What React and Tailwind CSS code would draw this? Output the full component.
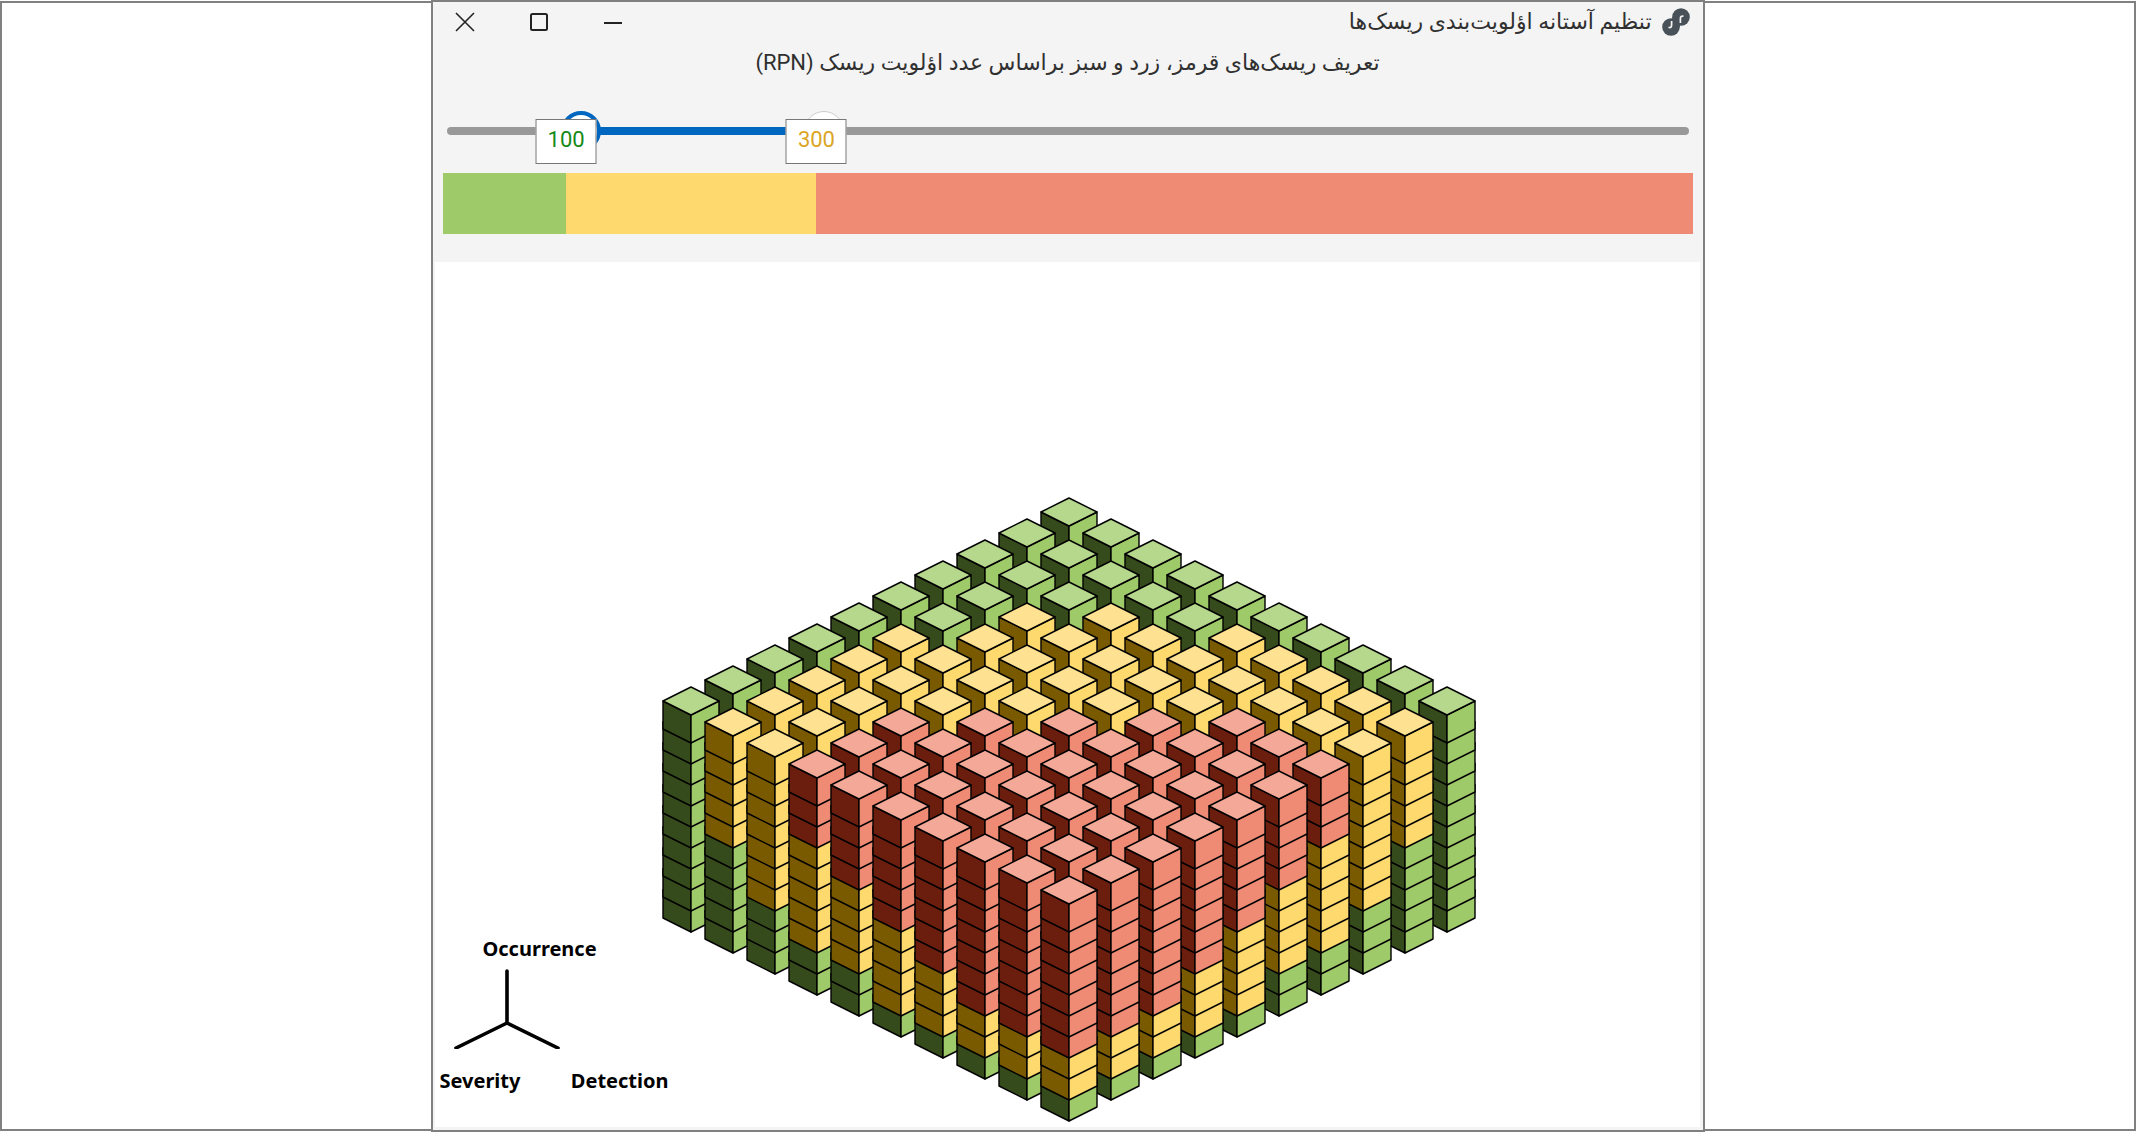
import { useState } from "react";

const GREEN = { top: "#b5d88c", left: "#364b1c", right: "#9eca69" };
const YELLOW = { top: "#ffe291", left: "#7a5a00", right: "#fed96e" };
const RED = { top: "#f4a998", left: "#6b1e0d", right: "#ef8b74" };

const SIZE = 10;
const MIN = 2;
const MAX = 1000;

function percent(value) {
  return ((value - MIN) / (MAX - MIN)) * 100;
}

function colorOf(rpn, low, high) {
  if (rpn <= low) return GREEN;
  if (rpn <= high) return YELLOW;
  return RED;
}

// One small box, x/y is the back corner of its top face
function Cube({ x, y, color }) {
  return (
    <g>
      <polygon
        fill={color.left}
        points={`${x - 28},${y + 14} ${x},${y + 28} ${x},${y + 56} ${x - 28},${y + 42}`}
      />
      <polygon
        fill={color.right}
        points={`${x + 28},${y + 14} ${x},${y + 28} ${x},${y + 56} ${x + 28},${y + 42}`}
      />
      <polygon
        fill={color.top}
        points={`${x},${y} ${x + 28},${y + 14} ${x},${y + 28} ${x - 28},${y + 14}`}
      />
    </g>
  );
}

function RiskCube({ low, high }) {
  const cubes = [];
  // back to front, bottom to top
  for (let s = 1; s <= SIZE; s++) {
    for (let d = 1; d <= SIZE; d++) {
      for (let o = 1; o <= SIZE; o++) {
        cubes.push(
          <Cube
            key={`${s}-${d}-${o}`}
            x={410 + (d - s) * 42}
            y={1 + (s + d - 2) * 21 + (SIZE - o) * 21}
            color={colorOf(s * d * o, low, high)}
          />
        );
      }
    }
  }
  return (
    <svg width="818" height="626" viewBox="0 0 818 626" aria-label="RPN cube">
      <g stroke="#000" strokeWidth="1.4" strokeLinejoin="round">
        {cubes}
      </g>
    </svg>
  );
}

function Axes() {
  return (
    <div className="w-60 text-xl leading-7 font-bold text-black font-['Noto_Sans',sans-serif]">
      <div className="pl-[47px]">Occurrence</div>
      <svg className="mt-1.5 mb-2.5 ml-[19px]" width="106" height="80" viewBox="0 0 106 80">
        <path
          d="M53 2V54M53 54L2 79M53 54L104 79"
          fill="none"
          stroke="#000"
          strokeWidth="3.6"
          strokeLinecap="round"
        />
      </svg>
      <div className="flex justify-between pt-2 pr-[7px] pl-1">
        <span>Severity</span>
        <span>Detection</span>
      </div>
    </div>
  );
}

function Logo() {
  return (
    <svg width="28" height="28" viewBox="0 0 28 28">
      <g fill="#475157">
        <circle cx="9" cy="19" r="8.8" />
        <circle cx="19" cy="9" r="8.8" />
        <path d="M10.200 9H17.800V19H10.200Z" />
      </g>
      <path
        d="M6.500 19.300Q9.600 20.300 9.600 17V13M18.400 15V10.500Q18.400 7.500 21.500 8.300"
        fill="none"
        stroke="#f4f4f4"
        strokeWidth="1.7"
      />
    </svg>
  );
}

function Thumb({ value, label, onChange, ring }) {
  return (
    <div className="absolute top-0 w-0" style={{ left: `${percent(value)}%` }}>
      <div className={`absolute top-0 -left-5 size-10 rounded-full bg-white ${ring}`} />
      <input
        type="range"
        min={MIN}
        max={MAX}
        value={value}
        aria-label={label}
        onChange={onChange}
        className="absolute top-0 -left-5 size-10 cursor-pointer opacity-0"
      />
    </div>
  );
}

function ValueBox({ value, text }) {
  return (
    <output
      className={`absolute top-2 flex h-[45px] w-[61px] -translate-x-1/2 justify-center border border-[#777] bg-white pt-1 text-[22px] leading-8 ${text}`}
      style={{ left: `${percent(value)}%` }}
    >
      {value}
    </output>
  );
}

export default function App() {
  const [low, setLow] = useState(100);
  const [high, setHigh] = useState(300);

  return (
    <div className="flex min-h-screen font-[Roboto,'DejaVu_Sans',sans-serif] text-[#303030]">
      <div className="my-px flex-1 border-2 border-r-0 border-[#808080] bg-white" />

      <main
        dir="rtl"
        className="flex w-[59.6%] flex-col border-2 border-[#808080] bg-[#f4f4f4] pr-[3px] pb-[3px] pl-[2px]"
      >
        {/* Title bar */}
        <header className="mb-px flex h-10 items-center justify-between pr-[10px] pl-5">
          <div className="flex items-center gap-2.5">
            <Logo />
            <h1 className="text-[22px] leading-8">تنظیم آستانه اؤلویت‌بندی ریسک‌ها</h1>
          </div>
          <div className="flex gap-[54px]">
            <button aria-label="Minimize">
              <svg width="20" height="20" viewBox="0 0 20 20">
                <path d="M1 11H19" stroke="#222" strokeWidth="2" />
              </svg>
            </button>
            <button aria-label="Maximize">
              <svg width="20" height="20" viewBox="0 0 20 20">
                <rect x="2" y="2" width="16" height="16" rx="1.5" fill="none" stroke="#222" strokeWidth="2" />
              </svg>
            </button>
            <button aria-label="Close">
              <svg width="20" height="20" viewBox="0 0 20 20">
                <path d="M1 1L19 19M19 1L1 19" stroke="#222" strokeWidth="1.6" />
              </svg>
            </button>
          </div>
        </header>

        <p className="text-center text-[22px] leading-10">
          تعریف ریسک‌های قرمز، زرد و سبز براساس عدد اؤلویت ریسک (RPN)
        </p>

        {/* Threshold slider */}
        <div dir="ltr" className="relative mr-[7px] ml-2 mt-7 h-[62px]">
          <div className="mx-1 pt-4">
            <div className="h-2 rounded-full bg-[#999]" />
          </div>
          <div className="absolute inset-x-[18px] top-0">
            <div
              className="absolute top-4 h-2 bg-[#0067c0]"
              style={{ left: `${percent(low)}%`, right: `${100 - percent(high)}%` }}
            />
            <Thumb
              value={low}
              label="Green limit"
              onChange={(e) => setLow(Math.min(Number(e.target.value), high))}
              ring="border-4 border-[#0067c0]"
            />
            <Thumb
              value={high}
              label="Yellow limit"
              onChange={(e) => setHigh(Math.max(Number(e.target.value), low))}
              ring="border border-[#ccc]"
            />
          </div>
          <ValueBox value={low} text="text-[#168a16]" />
          <ValueBox value={high} text="text-[#dca51f]" />
        </div>

        <div dir="ltr" className="mr-[7px] mb-7 ml-2 flex h-[61px] bg-[#ef8b74]">
          <div className="bg-[#9eca69]" style={{ width: `${percent(low)}%` }} />
          <div className="bg-[#fed96e]" style={{ width: `${percent(high) - percent(low)}%` }} />
        </div>

        {/* Chart */}
        <section dir="ltr" className="relative flex flex-1 items-end justify-center bg-white pb-1">
          <RiskCube low={low} high={high} />
          <div className="absolute bottom-8 left-0">
            <Axes />
          </div>
        </section>
      </main>

      <div className="my-px flex-1 border-2 border-l-0 border-[#808080] bg-white" />
    </div>
  );
}
